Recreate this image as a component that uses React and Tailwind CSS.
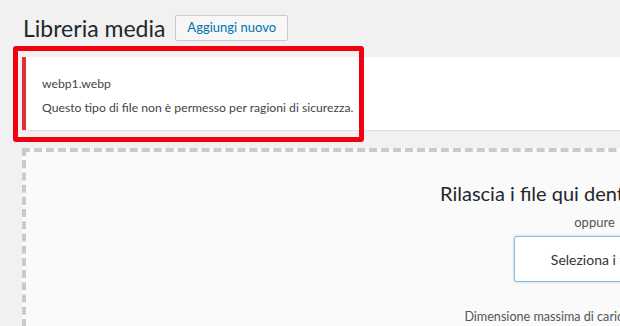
import React from "react"

function App() {
  return (
    <div
      className="relative w-[620px] h-[326px] overflow-hidden bg-[#f1f1f1] text-[#444]"
      style={{ fontFamily: 'Lato, "Open Sans", sans-serif' }}
    >
      <div className="w-[1200px] pl-[22px]">
        {/* header */}
        <div className="flex items-center pt-[15px] h-[41px]">
          <h1 className="ml-[1px] text-[23px] leading-[26px] font-normal text-[#23282d]">
            Libreria media
          </h1>
          <button className="ml-[10px] h-[26px] px-[11px] border border-[#ccc] bg-[#f7f7f7] rounded-[2px] text-[13px] text-[#0073aa]">
            Aggiungi nuovo
          </button>
        </div>

        {/* error notice */}
        <div className="mt-[16px] h-[73px] bg-white border-l-4 border-[#dc3232] shadow-[0_1px_1px_rgba(0,0,0,0.06)] pl-[16px] pt-[15px] text-[12.2px] leading-[24px] text-[#444]">
          <p>webp1.webp</p>
          <p>Questo tipo di file non è permesso per ragioni di sicurezza.</p>
        </div>

        {/* drop zone */}
        <div className="mt-[18px] w-[1145px] h-[240px] border-4 border-dashed border-[#c8cbce] bg-[#fafafa] flex flex-col items-center pt-[28px]">
          <p className="text-[20px] leading-[26px] text-[#23282d]">
            Rilascia i file qui dentro per caricarli
          </p>
          <p className="mt-[7px] text-[13px] leading-[18px] text-[#555]">oppure</p>
          <button className="mt-[5px] h-[46px] px-[36px] border border-[#8cbbe0] rounded-[3px] bg-white shadow-[0_0_2px_rgba(30,140,190,0.5)] text-[14px] text-[#333]">
            Seleziona i file
          </button>
          <p className="mt-[26px] text-[12.6px] leading-[18px] text-[#50575e]">
            Dimensione massima di caricamento file: 2 MB.
          </p>
        </div>
      </div>

      {/* red annotation frame */}
      <div className="absolute left-[13px] top-[46px] w-[351px] h-[96px] border-[5px] border-[#f00010] rounded-[3px]" />
    </div>
  )
}

export default App
